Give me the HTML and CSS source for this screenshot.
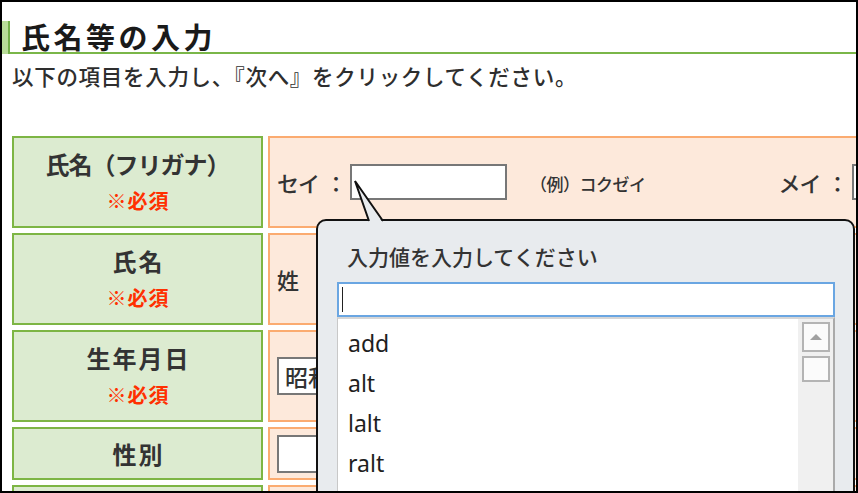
FILE: index.html
```html
<!DOCTYPE html>
<html lang="ja">
<head>
<meta charset="utf-8">
<title>氏名等の入力</title>
<link rel="stylesheet" href="styles.css">
</head>
<body>
<div class="frame">
  <h1 class="heading"><span class="mark"></span><span class="heading-text">氏名等の入力</span></h1>
  <p class="lead">以下の項目を入力し、『次へ』をクリックしてください。</p>

  <div class="form">
    <div class="label"><span class="name name-kana">氏名（フリガナ）</span><span class="req">※必須</span></div>
    <div class="value">
      <span class="field">セイ</span><span class="colon">：</span><span class="box box-kana"></span>
      <span class="example">（例）コクゼイ</span>
      <span class="field field-mei">メイ</span><span class="colon">：</span><span class="box box-kana"></span>
    </div>

    <div class="label"><span class="name spaced">氏名</span><span class="req">※必須</span></div>
    <div class="value"><span class="field">姓</span></div>

    <div class="label"><span class="name spaced">生年月日</span><span class="req">※必須</span></div>
    <div class="value"><span class="box box-select">昭和</span></div>

    <div class="label"><span class="name spaced">性別</span></div>
    <div class="value"><span class="box box-gender"></span></div>

    <div class="label"></div>
    <div class="value"></div>
  </div>

  <div class="popup">
    <div class="popup-title">入力値を入力してください</div>
    <div class="popup-input"><span class="caret"></span></div>
    <div class="list">
      <ul class="items">
        <li>add</li>
        <li>alt</li>
        <li>lalt</li>
        <li>ralt</li>
      </ul>
      <div class="scrollbar">
        <div class="sb-btn"><span class="sb-arrow"></span></div>
        <div class="sb-thumb"></div>
      </div>
    </div>
  </div>

  <svg class="tail" width="60" height="60" viewBox="0 0 60 60">
    <polygon points="15,11 29,53 43,53" fill="#e8ebee"/>
    <polyline points="29,51 15,11 43,51" fill="none" stroke="#111" stroke-width="2" stroke-linejoin="miter"/>
  </svg>
</div>
</body>
</html>
```

FILE: styles.css
```css
html, body {
  margin: 0;
  padding: 0;
  background: #fff;
}

body {
  font-family: "Noto Sans CJK JP", "Noto Sans", sans-serif;
  font-weight: 500;
  color: #333;
}

.frame {
  position: relative;
  width: 858px;
  height: 493px;
  box-sizing: border-box;
  border: 2px solid #000;
  overflow: hidden;
  background: #fff;
}

.heading {
  display: flex;
  margin: 19px 0 0 0;
  font-size: 29px;
  line-height: 31px;
  font-weight: bold;
  letter-spacing: 3.5px;
  color: #1a1a1a;
  border-bottom: 2px solid #7ab648;
}

.mark {
  width: 8px;
  margin-bottom: -2px;
  background: linear-gradient(to right, #b8dc98 0, #b8dc98 6px, #74b04a 6px, #74b04a 8px);
}

.heading-text {
  margin-left: 11px;
}

.lead {
  margin: 8px 0 0 10px;
  font-size: 21.5px;
  line-height: 28px;
  letter-spacing: 0.7px;
  color: #2e2e2e;
}

.form {
  display: grid;
  grid-template-columns: 251px 640px;
  grid-template-rows: 92px 92px 92px 53px 60px;
  gap: 5px;
  margin: 46px 0 0 10px;
}

.label {
  box-sizing: border-box;
  background: #dcebd0;
  border: 2px solid #7db544;
  display: flex;
  flex-direction: column;
  align-items: center;
  justify-content: center;
  gap: 7px;
}

.name {
  font-size: 24px;
  line-height: 30px;
  font-weight: bold;
  color: #333;
}

.name.name-kana {
  letter-spacing: -1px;
}

.name.spaced {
  letter-spacing: 2px;
  padding-left: 2px;
}

.req {
  font-size: 20px;
  line-height: 30px;
  font-weight: bold;
  color: #ff3000;
  letter-spacing: 1px;
  padding-left: 1px;
}

.value {
  box-sizing: border-box;
  background: #fde9db;
  border: 2px solid #fbab70;
  display: flex;
  align-items: center;
  padding-left: 7px;
  white-space: nowrap;
}

.field {
  font-size: 22px;
  line-height: 28px;
  letter-spacing: -1px;
  color: #333;
  flex-shrink: 0;
}

.colon {
  font-size: 22px;
  line-height: 28px;
  margin: 0 3px 0 6px;
  flex-shrink: 0;
}

.box {
  box-sizing: border-box;
  border: 2px solid #777;
  background: #fff;
  flex-shrink: 0;
}

.box-kana {
  width: 157px;
  height: 36px;
}

.example {
  font-size: 17px;
  line-height: 24px;
  margin-left: 23px;
  margin-top: 4px;
  letter-spacing: -0.5px;
  flex-shrink: 0;
}

.field-mei {
  margin-left: 133px;
}

.box-select {
  width: 150px;
  height: 38px;
  display: flex;
  align-items: center;
  padding-left: 6px;
  font-size: 23px;
}

.box-gender {
  width: 150px;
  height: 38px;
}

.popup {
  position: absolute;
  left: 314px;
  top: 217px;
  width: 539px;
  height: 330px;
  box-sizing: border-box;
  border: 2px solid #111;
  border-radius: 10px;
  background: #e8ebee;
  padding: 0 18px 0 19px;
}

.popup-title {
  margin: 21px 0 0 10px;
  font-size: 21px;
  line-height: 28px;
  color: #333;
}

.popup-input {
  box-sizing: border-box;
  height: 35px;
  margin-top: 12px;
  border: 2px solid #6aa6e2;
  background: #fff;
  display: flex;
  align-items: center;
}

.caret {
  width: 1px;
  height: 25px;
  margin-left: 3px;
  background: #222;
}

.list {
  display: flex;
  height: 240px;
  background: #fff;
  border-top: 2px solid #d6d6d6;
  border-left: 1px solid #c8c8c8;
  border-right: 2px solid #aaa;
}

.items {
  flex: 1;
  list-style: none;
  margin: 0;
  padding: 4px 0 0 0;
}

.items li {
  font-family: "Noto Sans", sans-serif;
  font-weight: 400;
  font-size: 23px;
  line-height: 40px;
  padding-left: 10px;
  color: #1e1e1e;
}

.scrollbar {
  width: 35px;
  background: #f0f0f0;
  display: flex;
  flex-direction: column;
  align-items: center;
  gap: 4px;
  padding-top: 3px;
}

.sb-btn {
  box-sizing: border-box;
  width: 28px;
  height: 30px;
  border: 2px solid #b4b4b4;
  background: #fbfbfb;
  display: flex;
  align-items: center;
  justify-content: center;
}

.sb-arrow {
  width: 0;
  height: 0;
  border-left: 6px solid transparent;
  border-right: 6px solid transparent;
  border-bottom: 6px solid #a0a0a0;
}

.sb-thumb {
  box-sizing: border-box;
  width: 28px;
  height: 26px;
  border: 2px solid #b4b4b4;
  background: #fbfbfb;
}

.tail {
  position: absolute;
  left: 338px;
  top: 168px;
}
```
